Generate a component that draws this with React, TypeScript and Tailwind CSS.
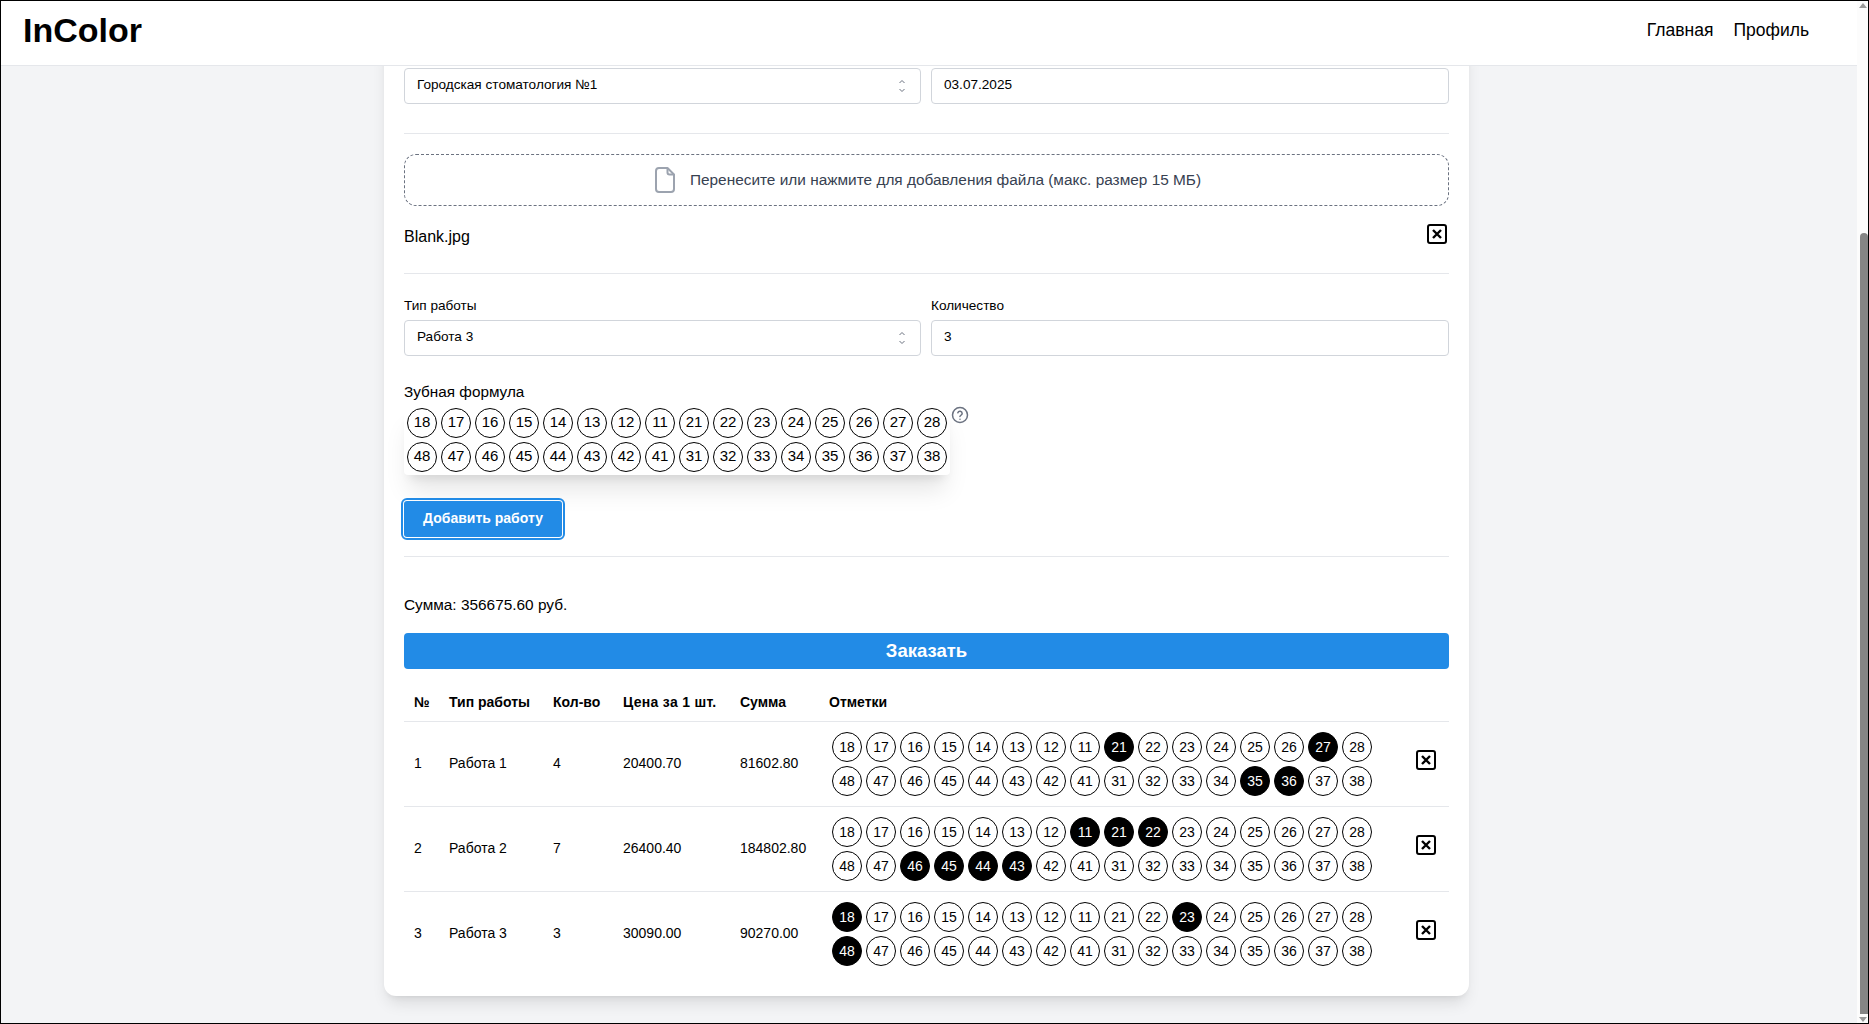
const upperTeeth = [18, 17, 16, 15, 14, 13, 12, 11, 21, 22, 23, 24, 25, 26, 27, 28]
const lowerTeeth = [48, 47, 46, 45, 44, 43, 42, 41, 31, 32, 33, 34, 35, 36, 37, 38]

const works = [
  { id: 1, name: 'Работа 1', count: 4, price: '20400.70', sum: '81602.80', marks: [21, 27, 35, 36] },
  { id: 2, name: 'Работа 2', count: 7, price: '26400.40', sum: '184802.80', marks: [11, 21, 22, 46, 45, 44, 43] },
  { id: 3, name: 'Работа 3', count: 3, price: '30090.00', sum: '90270.00', marks: [18, 23, 48] },
]

function Tooth({ n, active, large }: { n: number; active?: boolean; large?: boolean }) {
  return (
    <span
      className={
        'm-[2px] flex h-[30px] w-[30px] items-center justify-center rounded-full border border-black ' +
        (large ? 'text-[15px] ' : 'text-[14px] ') +
        (active ? 'bg-black text-white' : 'bg-white text-black')
      }
    >
      {n}
    </span>
  )
}

function TeethGrid({ marks = [], large }: { marks?: number[]; large?: boolean }) {
  return (
    <div className="flex w-[544px] flex-wrap">
      {upperTeeth.concat(lowerTeeth).map((n) => (
        <Tooth key={n} n={n} active={marks.includes(n)} large={large} />
      ))}
    </div>
  )
}

function CloseIcon() {
  return (
    <svg width="20" height="20" viewBox="0 0 20 20" fill="none" stroke="black" className="shrink-0">
      <rect x="1" y="1" width="18" height="18" rx="2" strokeWidth="2" />
      <path d="M6 6l8 8M14 6l-8 8" strokeWidth="2.400" />
    </svg>
  )
}

function SelectArrows() {
  return (
    <svg width="14" height="14" viewBox="0 0 14 14" fill="none" stroke="#6b7280" strokeWidth="1">
      <path d="M4.500 4L7 1.500 9.500 4M4.500 10L7 12.500 9.500 10" />
    </svg>
  )
}

function FakeSelect({ value }: { value: string }) {
  return (
    <div className="flex h-9 items-center justify-between rounded border border-[#d1d5db] bg-white pr-[11px] pl-[12px] text-[13.600px]">
      <span>{value}</span>
      <SelectArrows />
    </div>
  )
}

function FakeInput({ value }: { value: string }) {
  return (
    <div className="flex h-9 items-center rounded border border-[#d1d5db] bg-white px-[12px] text-[13.600px]">{value}</div>
  )
}

export default function App() {
  return (
    <div
      className="flex h-screen overflow-hidden border border-black bg-[#f3f4f6] text-black"
      style={{ fontFamily: '"Liberation Sans", Arial, sans-serif' }}
    >
      <div className="flex min-w-0 flex-1 flex-col">
        {/* Header */}
        <header className="z-10 flex h-[65px] shrink-0 items-center justify-between border-b border-[#e5e7eb] bg-white pr-[48px] pb-[5px] pl-[22px]">
          <span className="-mt-px text-[34px] font-bold">InColor</span>
          <nav className="flex gap-[20px] text-[17.500px]">
            <a href="#">Главная</a>
            <a href="#">Профиль</a>
          </nav>
        </header>

        {/* Page, scrolled to the bottom */}
        <main className="flex min-h-0 flex-1 flex-col justify-end overflow-hidden pr-[5px] pb-[27px]">
          <div className="mx-auto w-[1085px] shrink-0 rounded-xl bg-white px-5 pt-8 pb-5 shadow-lg">
            <div className="grid grid-cols-[517px_1fr] gap-[10px]">
              <FakeSelect value="Городская стоматология №1" />
              <FakeInput value="03.07.2025" />
            </div>

            <div className="mt-[29px] h-px bg-[#e5e7eb]" />

            <div className="mt-5 flex h-[52px] items-center justify-center gap-[15px] rounded-xl border border-dashed border-[#6b7280] pl-[3px] text-[15.400px] text-[#374151]">
              <svg width="20" height="26" viewBox="0 0 20 26" fill="none" stroke="#9ca3af" strokeWidth="2" strokeLinejoin="round">
                <path d="M4 1h8.500L19 7.500V22a3 3 0 0 1-3 3H4a3 3 0 0 1-3-3V4a3 3 0 0 1 3-3z" />
                <path d="M12.500 1v4.500a2 2 0 0 0 2 2H19" />
              </svg>
              <span>Перенесите или нажмите для добавления файла (макс. размер 15 МБ)</span>
            </div>

            <div className="mt-[18px] flex h-[26px] items-center justify-between pr-[2px] text-[16px]">
              <span>Blank.jpg</span>
              <span className="-mt-[5px]">
                <CloseIcon />
              </span>
            </div>

            <div className="mt-[23px] h-px bg-[#e5e7eb]" />

            <div className="mt-[24px] grid grid-cols-[517px_1fr] gap-[10px]">
              <div>
                <div className="mb-[6px] text-[13.600px] leading-[16px]">Тип работы</div>
                <FakeSelect value="Работа 3" />
              </div>
              <div>
                <div className="mb-[6px] text-[13.600px] leading-[16px]">Количество</div>
                <FakeInput value="3" />
              </div>
            </div>

            <div className="mt-[27px] text-[15.300px] leading-[18px]">Зубная формула</div>
            <div className="mt-[4px] flex items-start">
              <div className="rounded bg-white p-px shadow-xl">
                <TeethGrid large />
              </div>
              <svg width="18" height="18" viewBox="0 0 24 24" fill="none" stroke="#6b7280" strokeWidth="2" strokeLinecap="round" className="mt-[1px] ml-px">
                <circle cx="12" cy="12" r="10" />
                <path d="M9.100 9a3 3 0 0 1 5.800 1c0 2-3 2.500-3 4" />
                <path d="M12 17.500h.01" />
              </svg>
            </div>

            <button className="mt-[26px] h-9 w-[158px] rounded-[3px] bg-[#228be6] text-[14px] font-bold text-white outline-2 outline-offset-1 outline-[#228be6]">
              Добавить работу
            </button>

            <div className="mt-[19px] h-px bg-[#e5e7eb]" />

            <div className="mt-[39px] text-[15.400px] leading-[18px]">Сумма: 356675.60 руб.</div>

            <button className="mt-[19px] h-9 w-full rounded bg-[#228be6] text-[18.500px] font-bold text-white">Заказать</button>

            <table className="mt-[15px] w-full table-fixed border-collapse text-left text-[14px]">
              <thead>
                <tr className="h-[38px] border-b border-[#e5e7eb]">
                  <th className="w-[35px] px-[10px] font-bold">№</th>
                  <th className="w-[104px] px-[10px] font-bold">Тип работы</th>
                  <th className="w-[70px] px-[10px] font-bold">Кол-во</th>
                  <th className="w-[117px] px-[10px] font-bold tracking-[0.3px]">Цена за 1 шт.</th>
                  <th className="w-[89px] px-[10px] font-bold">Сумма</th>
                  <th className="px-[10px] font-bold">Отметки</th>
                  <th className="w-[50px]" />
                </tr>
              </thead>
              <tbody>
                {works.map((w, i) => (
                  <tr key={w.id} className={i < works.length - 1 ? 'border-b border-[#e5e7eb]' : ''}>
                    <td className="px-[10px] pb-[2px]">{w.id}</td>
                    <td className="px-[10px] pb-[2px]">{w.name}</td>
                    <td className="px-[10px] pb-[2px]">{w.count}</td>
                    <td className="px-[10px] pb-[2px]">{w.price}</td>
                    <td className="px-[10px] pb-[2px]">{w.sum}</td>
                    <td className="py-2 pr-[9px] pl-[11px]">
                      <TeethGrid marks={w.marks} />
                    </td>
                    <td className="pr-[13px] pb-[10px] text-right">
                      <span className="inline-block align-middle">
                        <CloseIcon />
                      </span>
                    </td>
                  </tr>
                ))}
              </tbody>
            </table>
          </div>
        </main>
      </div>

      {/* Scrollbar */}
      <div className="flex w-[11px] shrink-0 flex-col items-end bg-[#fcfcfc] pb-[1px]">
        <div className="mt-[2px] mr-[1px] h-0 w-0 border-x-[4px] border-b-[5px] border-x-transparent border-b-[#9a9a9a]" />
        <div className="mt-[225px] w-2 flex-1 rounded-t bg-[#858585]" />
        <div className="mt-[3px] mr-[1px] h-0 w-0 border-x-[4px] border-t-[5px] border-x-transparent border-t-[#9a9a9a]" />
      </div>
    </div>
  )
}
